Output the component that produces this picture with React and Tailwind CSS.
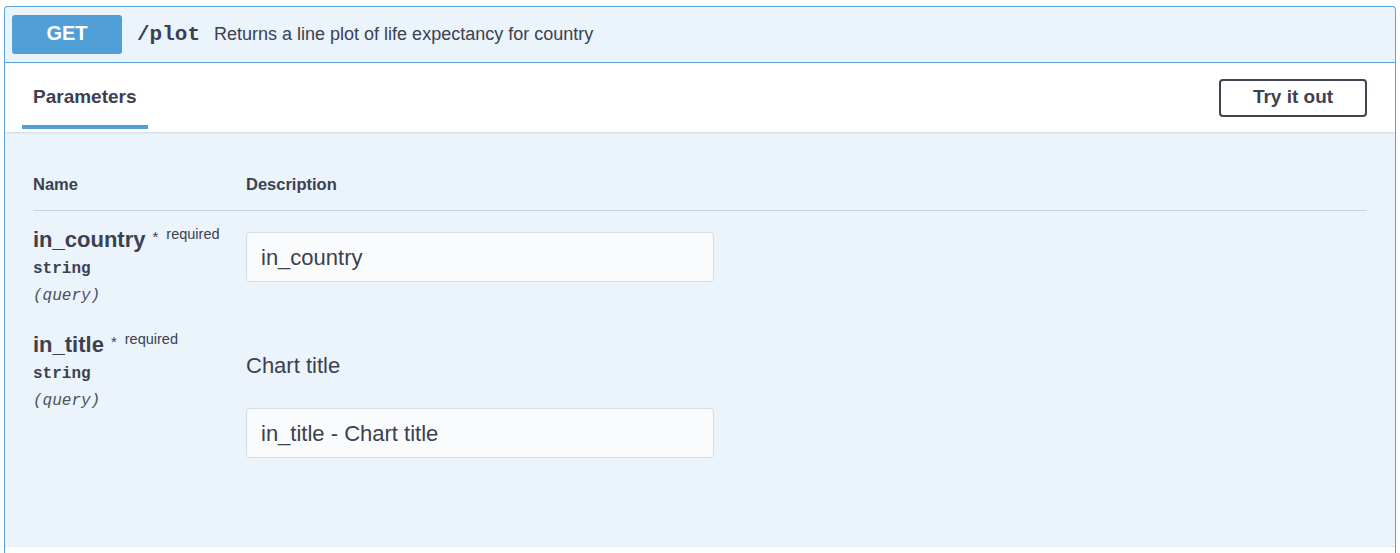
export default function App() {
  const sans = { fontFamily: '"Liberation Sans", Arial, sans-serif' };

  const params = [
    { name: "in_country", type: "string", where: "(query)", desc: null, placeholder: "in_country" },
    { name: "in_title", type: "string", where: "(query)", desc: "Chart title", placeholder: "in_title - Chart title" },
  ];

  return (
    <div className="min-h-screen bg-white pt-[6px] px-[4px] text-[#3b4151]" style={sans}>
      <div className="rounded-t-[4px] border border-b-0 border-[#5ba3dc] bg-[#ebf3fb] overflow-hidden">
        {/* summary row */}
        <div className="flex h-[56px] items-center border-b border-[#5ba3dc] px-[7px]">
          <div className="flex h-[39px] w-[110px] items-center justify-center rounded-[3px] bg-[#519fd7] pb-[3px] text-[20px] font-bold text-white">
            GET
          </div>
          <span className="ml-[15px] font-['Liberation_Mono',monospace] text-[21px] font-bold text-[#3b4151]">/plot</span>
          <span className="ml-[14px] text-[18px] text-[#3b4151]">Returns a line plot of life expectancy for country</span>
        </div>

        {/* section header */}
        <div className="flex h-[69px] items-center justify-between bg-white pl-[17px] pr-[28px] shadow-[0_1px_2px_rgba(0,0,0,0.12)]">
          <div className="relative flex h-full items-center px-[11px]">
            <span className="text-[19px] font-bold text-[#3b4151]">Parameters</span>
            <div className="absolute bottom-[3px] left-0 h-[4px] w-[126px] bg-[#519fd7]" />
          </div>
          <button className="h-[38px] w-[148px] rounded-[4px] border-2 border-[#41444e] bg-white text-[19px] font-bold text-[#3b4151]">
            Try it out
          </button>
        </div>

        {/* parameters table */}
        <div className="h-[414px] px-[28px] pt-[42px]">
          <div className="flex border-b border-[#c4d3e2] pb-[16px] text-[16.5px] font-bold leading-[20px] text-[#3b4151]">
            <div className="w-[213px]">Name</div>
            <div>Description</div>
          </div>

          {params.map((p, i) => (
            <div key={p.name} className={`flex ${i === 0 ? "pt-[15px]" : "pt-[25px]"}`}>
              <div className="w-[213px]">
                <div className="flex items-start leading-[28px]">
                  <span className="text-[22px] font-bold">{p.name}</span>
                  <span className="ml-[7px] text-[15px] leading-[22px]">*</span>
                  <span className="ml-[8px] text-[14.5px] leading-[16px]">required</span>
                </div>
                <div className="mt-[5px] font-['Liberation_Mono',monospace] text-[16px] font-bold leading-[20px]">{p.type}</div>
                <div className="mt-[7px] font-['Liberation_Mono',monospace] text-[16px] italic leading-[20px] text-[#4a5060]">{p.where}</div>
              </div>
              <div>
                {p.desc && <div className="mt-[21px] mb-[28px] text-[22px] leading-[28px]">{p.desc}</div>}
                <div className={`flex h-[50px] w-[468px] items-center rounded-[4px] border border-[#d6dce6] bg-[#fafbfc] px-[14px] text-[22px] text-[#3b4151] ${p.desc ? "" : "mt-[6px]"}`}>
                  {p.placeholder}
                </div>
              </div>
            </div>
          ))}
        </div>

        <div className="h-[10px] border-t border-dotted border-[#d6dce6] bg-white" />
      </div>
    </div>
  );
}
